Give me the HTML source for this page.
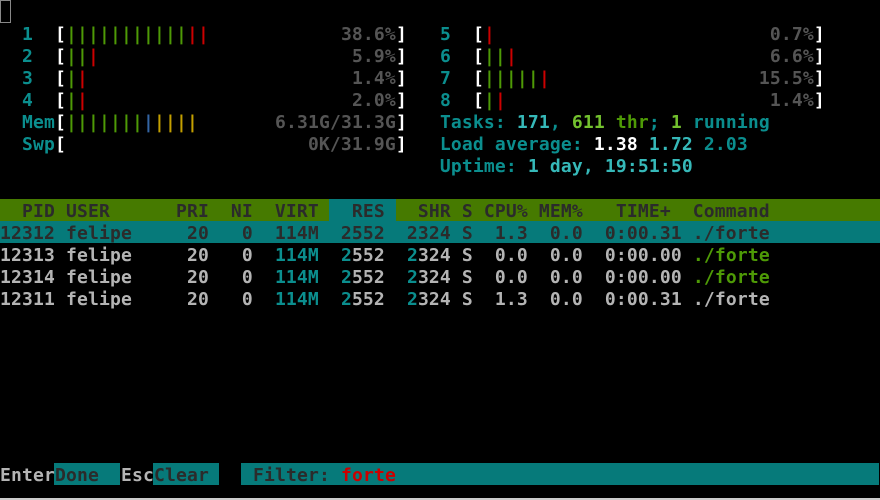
<!DOCTYPE html>
<html><head><meta charset="utf-8"><style>
html,body{margin:0;padding:0;background:#000;width:880px;height:500px;overflow:hidden}
.r{position:absolute;left:0;height:22px;line-height:22px;margin-top:2px;white-space:pre;font-family:"DejaVu Sans Mono","Liberation Mono",monospace;font-weight:bold;font-size:18px;letter-spacing:0.16px;color:#b4b4b4}
.t{color:#0b8e8e}.c{color:#36b9b9}.w{color:#fff}.d{color:#555}.g{color:#4e9a06}.rd{color:#cc0000}.b{color:#3465a4}.y{color:#c4a000}.lg{color:#73c12e}
.k{color:#2b2b2b}
.bg{position:absolute}
</style></head><body>
<div class="bg" style="left:0;top:0;width:9px;height:21px;border:1px solid #888"></div>
<div class="bg" style="left:0;top:199px;width:880px;height:22px;background:#467a00"></div>
<div class="bg" style="left:329px;top:199px;width:67px;height:22px;background:#067a7a"></div>
<div class="bg" style="left:0;top:221px;width:880px;height:22px;background:#067a7a"></div>
<div class="bg" style="left:54px;top:463px;width:66px;height:22px;background:#067a7a"></div>
<div class="bg" style="left:153px;top:463px;width:66px;height:22px;background:#067a7a"></div>
<div class="bg" style="left:241px;top:463px;width:638px;height:22px;background:#067a7a"></div>
<div class="bg" style="left:0;top:498px;width:880px;height:2px;background:#ccc"></div>

<div class="r" style="top:22px">  <span class="t">1</span>  <span class="w">[</span><span class="g">|||||||||||</span><span class="rd">||</span>            <span class="d">38.6%</span><span class="w">]</span>   <span class="t">5</span>  <span class="w">[</span><span class="rd">|</span>                         <span class="d">0.7%</span><span class="w">]</span></div>
<div class="r" style="top:44px">  <span class="t">2</span>  <span class="w">[</span><span class="g">||</span><span class="rd">|</span>                       <span class="d">5.9%</span><span class="w">]</span>   <span class="t">6</span>  <span class="w">[</span><span class="g">||</span><span class="rd">|</span>                       <span class="d">6.6%</span><span class="w">]</span></div>
<div class="r" style="top:66px">  <span class="t">3</span>  <span class="w">[</span><span class="g">|</span><span class="rd">|</span>                        <span class="d">1.4%</span><span class="w">]</span>   <span class="t">7</span>  <span class="w">[</span><span class="g">|||||</span><span class="rd">|</span>                   <span class="d">15.5%</span><span class="w">]</span></div>
<div class="r" style="top:88px">  <span class="t">4</span>  <span class="w">[</span><span class="g">|</span><span class="rd">|</span>                        <span class="d">2.0%</span><span class="w">]</span>   <span class="t">8</span>  <span class="w">[</span><span class="g">|</span><span class="rd">|</span>                        <span class="d">1.4%</span><span class="w">]</span></div>
<div class="r" style="top:110px">  <span class="t">Mem</span><span class="w">[</span><span class="g">|||||||</span><span class="b">|</span><span class="y">||||</span>       <span class="d">6.31G/31.3G</span><span class="w">]</span>   <span class="t">Tasks: </span><span class="c">171</span><span class="t">, </span><span class="lg">611</span><span class="g"> thr</span><span class="t">; </span><span class="lg">1</span><span class="t"> running</span></div>
<div class="r" style="top:132px">  <span class="t">Swp</span><span class="w">[</span>                      <span class="d">0K/31.9G</span><span class="w">]</span>   <span class="t">Load average: </span><span class="w">1.38 </span><span class="c">1.72 </span><span class="t">2.03</span></div>
<div class="r" style="top:154px">                                        <span class="t">Uptime: </span><span class="c">1 day, 19:51:50</span></div>

<div class="r k" style="top:199px">  PID USER      PRI  NI  VIRT   RES   SHR S CPU% MEM%   TIME+  Command</div>
<div class="r k" style="top:221px">12312 felipe     20   0  114M  2552  2324 S  1.3  0.0  0:00.31 ./forte</div>
<div class="r" style="top:243px">12313 felipe     20   0  <span class="t">114M</span>  <span class="t">2</span>552  <span class="t">2</span>324 S  0.0  0.0  0:00.00 <span class="g">./forte</span></div>
<div class="r" style="top:265px">12314 felipe     20   0  <span class="t">114M</span>  <span class="t">2</span>552  <span class="t">2</span>324 S  0.0  0.0  0:00.00 <span class="g">./forte</span></div>
<div class="r" style="top:287px">12311 felipe     20   0  <span class="t">114M</span>  <span class="t">2</span>552  <span class="t">2</span>324 S  1.3  0.0  0:00.31 ./forte</div>

<div class="r" style="top:463px">Enter<span class="k">Done  </span>Esc<span class="k">Clear </span>   <span class="k">Filter: </span><span class="rd">forte</span></div>
</body></html>
